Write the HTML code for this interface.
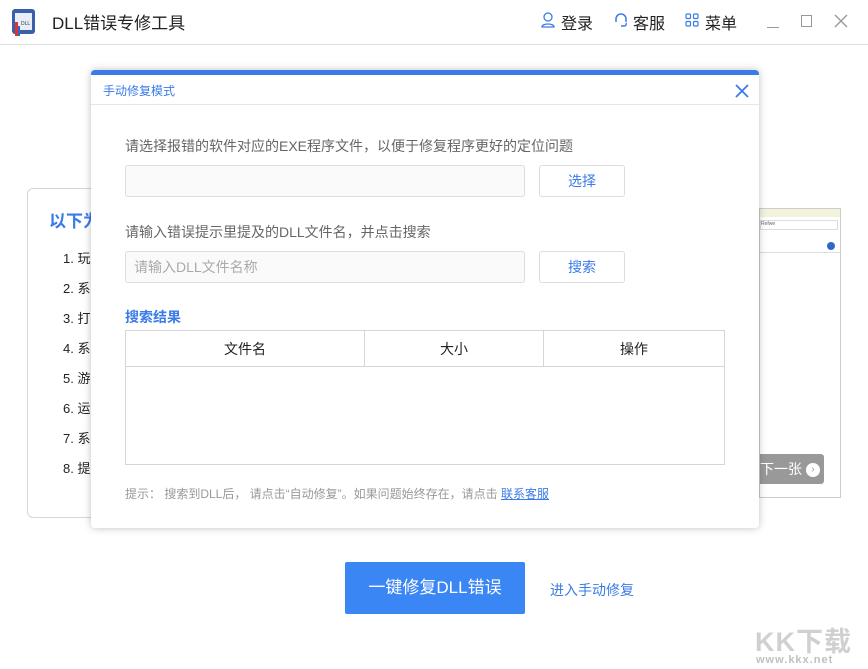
<!DOCTYPE html>
<html><head><meta charset="utf-8"><style>
*{box-sizing:border-box;margin:0;padding:0}
body{width:868px;height:669px;overflow:hidden;background:#fff;font-family:"Liberation Sans","Noto Sans CJK SC",sans-serif;position:relative;color:#333}
.abs{position:absolute}
.hdr{left:0;top:0;width:868px;height:45px;border-bottom:1px solid #ddd}
.card{left:27px;top:188px;width:200px;height:330px;border:1px solid #d6d6d6;border-radius:6px}
.card h3{position:absolute;left:21px;top:18px;font-size:17px;color:#3a7be8;font-weight:bold}
.card .it{position:absolute;left:35px;font-size:13px;color:#222}
.shot{left:759px;top:208px;width:82px;height:290px;border:1px solid #ccc;background:#fff}
.dlg{left:91px;top:70px;width:668px;height:458px;background:#fff;border-top:5px solid #3a7be8;border-radius:4px;box-shadow:0 0 8px rgba(0,0,0,.25)}
.lbl{font-size:14px;color:#666}
.inp{border:1px solid #ddd;border-radius:3px;background:#fafafa;height:32px}
.btn{border:1px solid #ddd;border-radius:3px;background:#fff;height:32px;color:#3a7be8;font-size:14px;text-align:center;line-height:30px}
table{border-collapse:collapse}
td{border:1px solid #d6d6d6;text-align:center;font-size:14px;color:#222}
</style></head><body>
<div class="abs hdr">
 <svg class="abs" style="left:11px;top:8px" width="26" height="30" viewBox="0 0 26 30"><rect x="1" y="1" width="23" height="25" rx="3" fill="#3b5fa8"/><rect x="4" y="5" width="17" height="17" fill="#e8eef8"/><text x="10" y="17" font-size="5" font-family="Liberation Sans" fill="#333">DLL</text><rect x="4" y="14" width="3" height="14" fill="#d33"/><rect x="7" y="18" width="2" height="10" fill="#36c"/></svg>
 <div class="abs" style="left:52px;top:9px;font-size:17px;color:#222">DLL错误专修工具</div>
 <svg class="abs" style="left:541px;top:12px" width="14" height="16" viewBox="0 0 14 16" fill="none" stroke="#3a7be8" stroke-width="1.3"><circle cx="7" cy="5" r="4"/><path d="M1 15c0-4 12-4 12 0z"/></svg>
 <div class="abs" style="left:561px;top:10px;font-size:16px;color:#222">登录</div>
 <svg class="abs" style="left:613px;top:12px" width="16" height="16" viewBox="0 0 16 16" fill="none" stroke="#3a7be8" stroke-width="1.5"><path d="M3 10V7a5 5 0 0 1 10 0v3M8 14h3a2 2 0 0 0 2-3"/></svg>
 <div class="abs" style="left:633px;top:10px;font-size:16px;color:#222">客服</div>
 <svg class="abs" style="left:685px;top:13px" width="14" height="14" viewBox="0 0 14 14" fill="none" stroke="#3a7be8" stroke-width="1.2"><rect x="1" y="1" width="4.5" height="4.5" rx="1"/><rect x="8.5" y="1" width="4.5" height="4.5" rx="1"/><rect x="1" y="8.5" width="4.5" height="4.5" rx="1"/><rect x="8.5" y="8.5" width="4.5" height="4.5" rx="1"/></svg>
 <div class="abs" style="left:705px;top:10px;font-size:16px;color:#222">菜单</div>
 <div class="abs" style="left:767px;top:27px;width:12px;height:1px;background:#999"></div>
 <div class="abs" style="left:801px;top:15px;width:11px;height:12px;border:1.5px solid #999"></div>
 <svg class="abs" style="left:834px;top:14px" width="14" height="14" viewBox="0 0 14 14" stroke="#999" stroke-width="1.4"><path d="M1 1l12 12M13 1L1 13"/></svg>
</div>
<div class="abs card"><h3>以下为</h3>
<div class="it" style="top:59px">1. 玩游</div><div class="it" style="top:89px">2. 系统</div><div class="it" style="top:119px">3. 打开</div><div class="it" style="top:149px">4. 系统</div><div class="it" style="top:179px">5. 游戏</div><div class="it" style="top:209px">6. 运行</div><div class="it" style="top:239px">7. 系统</div><div class="it" style="top:269px">8. 提示</div></div>
<div class="abs shot">
 <div class="abs" style="left:0;top:0;width:80px;height:8px;background:#f3f3dc"></div>
 <div class="abs" style="left:0;top:11px;width:78px;height:10px;border:1px solid #ddd;font-size:5px;color:#666">Refwe</div>
 <div class="abs" style="left:0;top:30px;width:80px;height:14px;border-bottom:1px solid #ddd"></div>
 <div class="abs" style="left:67px;top:33px;width:8px;height:8px;border-radius:50%;background:#36c"></div>
 <div class="abs" style="left:0;top:245px;width:64px;height:30px;background:#999;border-radius:0 3px 3px 0;color:#fff;font-size:14px;line-height:30px">下一张 <span style="display:inline-block;width:14px;height:14px;border-radius:50%;background:#fff;color:#999;font-size:10px;line-height:14px;text-align:center;vertical-align:middle">›</span></div>
</div>
<div class="abs dlg">
 <div class="abs" style="left:12px;top:7px;font-size:12px;color:#3a7be8">手动修复模式</div>
 <svg class="abs" style="left:644px;top:9px" width="14" height="14" viewBox="0 0 14 14" stroke="#3a7be8" stroke-width="1.8"><path d="M1 1l12 12M13 1L1 13"/></svg>
 <div class="abs" style="left:0;top:29px;width:668px;height:1px;background:#e6e6e6"></div>
 <div class="abs lbl" style="left:34px;top:61px">请选择报错的软件对应的EXE程序文件，以便于修复程序更好的定位问题</div>
 <div class="abs inp" style="left:34px;top:90px;width:400px"></div>
 <div class="abs btn" style="left:448px;top:90px;width:86px">选择</div>
 <div class="abs lbl" style="left:34px;top:147px">请输入错误提示里提及的DLL文件名，并点击搜索</div>
 <div class="abs inp" style="left:34px;top:176px;width:400px;font-size:14px;color:#aaa;line-height:30px;padding-left:8px">请输入DLL文件名称</div>
 <div class="abs btn" style="left:448px;top:176px;width:86px">搜索</div>
 <div class="abs" style="left:34px;top:232px;font-size:14px;color:#3a7be8;font-weight:bold">搜索结果</div>
 <table class="abs" style="left:34px;top:255px;width:600px"><tr style="height:36px"><td style="width:239px">文件名</td><td style="width:179px">大小</td><td>操作</td></tr><tr style="height:98px"><td colspan="3"></td></tr></table>
 <div class="abs" style="left:34px;top:410px;font-size:12px;color:#999">提示： 搜索到DLL后， 请点击“自动修复”。如果问题始终存在，请点击 <span style="color:#3a7be8;text-decoration:underline">联系客服</span></div>
</div>
<div class="abs" style="left:345px;top:562px;width:180px;height:52px;background:#3a86f5;border-radius:2px;color:#fff;font-size:17px;text-align:center;line-height:52px">一键修复DLL错误</div>
<div class="abs" style="left:550px;top:580px;font-size:14px;color:#3a7be8">进入手动修复</div>
<div class="abs" style="left:755px;top:620px;font-size:27px;font-weight:bold;color:#d0d0d0;letter-spacing:1px">KK下载</div>
<div class="abs" style="left:756px;top:654px;font-size:11px;font-weight:bold;color:#c0c0c0;letter-spacing:1px">www.kkx.net</div>
</body></html>
